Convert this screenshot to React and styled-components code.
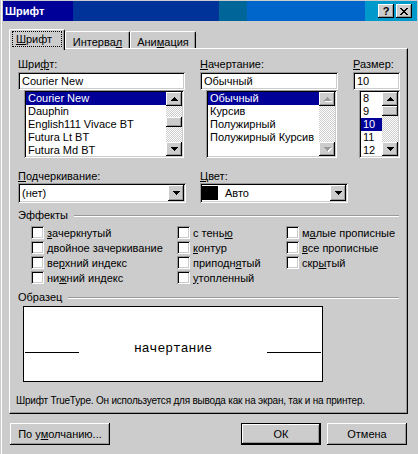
import React from "react";
import styled, { createGlobalStyle, css } from "styled-components";

const FACE = "#cccccc";
const SHADOW = "#999999";
const SEL = "#000099";

const GlobalStyle = createGlobalStyle`
  html, body { margin: 0; padding: 0; background: ${FACE}; }
  body {
    font-family: "Liberation Sans", Arial, sans-serif;
    font-size: 11px;
    color: #000;
  }
  *, *::before, *::after { box-sizing: border-box; }
`;

const raised = css`
  background-color: ${FACE};
  box-shadow: inset -1px -1px 0 #000, inset 1px 1px 0 #fff,
    inset -2px -2px 0 ${SHADOW}, inset 2px 2px 0 ${FACE};
`;

const sunken = css`
  box-shadow: inset 1px 1px 0 ${SHADOW}, inset -1px -1px 0 #fff,
    inset 2px 2px 0 #000, inset -2px -2px 0 ${FACE};
`;

const Window = styled.div`
  width: 418px;
  height: 454px;
  background: ${FACE};
  padding: 1px 1px 0 3px;
  display: flex;
  flex-direction: column;
  box-shadow: inset 1px 0 0 ${FACE}, inset 2px 0 0 #fff;
`;

const TitleBar = styled.div`
  height: 20px;
  flex: none;
  display: flex;
  align-items: center;
  padding: 0 5px 0 2px;
  color: #fff;
  background: linear-gradient(
    to right,
    #000099 0 70px,
    #003399 70px 216px,
    #006699 216px 244px,
    #0066cc 244px 362px,
    #0099cc 362px
  );
`;

const TitleText = styled.div`
  font-weight: bold;
  font-size: 11px;
  line-height: 14px;
`;

const CaptionButtons = styled.div`
  margin-left: auto;
  display: flex;
  gap: 2px;
`;

const CaptionButton = styled.div`
  width: 16px;
  height: 14px;
  ${raised};
  display: flex;
  align-items: center;
  justify-content: center;
  color: #000;
  font-weight: bold;
  font-size: 11px;
  line-height: 14px;
`;

const Body = styled.div`
  flex: 1;
  display: flex;
  flex-direction: column;
  padding: 8px 9px 0 6px;
`;

const TabStrip = styled.div`
  height: 19px;
  display: flex;
  align-items: flex-end;
`;

const Tab = styled.div`
  width: ${(p) => p.$w}px;
  height: ${(p) => (p.$active ? 21 : 17)}px;
  margin-bottom: ${(p) => (p.$active ? -2 : 0)}px;
  background: ${FACE};
  border-top: 1px solid #fff;
  border-left: 1px solid #fff;
  border-right: 1px solid #000;
  border-radius: 2px 2px 0 0;
  box-shadow: inset -1px 0 0 ${SHADOW};
  display: flex;
  justify-content: center;
  align-items: flex-start;
  padding: ${(p) => (p.$active ? "1px 2px 0" : "3px 2px 0")};
  line-height: 14px;
  white-space: nowrap;
  ${(p) => p.$active && "position: relative; z-index: 1;"}
`;

const TabLabel = styled.div`
  flex: 1;
  text-align: center;
  border: 1px dotted ${(p) => (p.$focus ? "#000" : "transparent")};
  padding-right: 6px;
`;

const U = styled.span`
  text-decoration: underline;
`;

const Panel = styled.div`
  height: 366px;
  flex: none;
  border-top: 1px solid #fff;
  border-left: 1px solid #fff;
  border-right: 1px solid #000;
  border-bottom: 1px solid #000;
  box-shadow: inset -1px -1px 0 ${SHADOW};
  padding: 9px 0 0 8px;
  display: flex;
  flex-direction: column;
`;

const TopFields = styled.div`
  display: grid;
  grid-template-columns: 167px 138px 47px;
  column-gap: 15px;
`;

const Field = styled.div`
  display: flex;
  flex-direction: column;
  min-width: 0;
`;

const Label = styled.div`
  height: 13px;
  line-height: 13px;
  white-space: nowrap;
`;

const TextBox = styled.div`
  height: 18px;
  margin-top: 1px;
  background: #fff;
  ${sunken};
  padding: 0 4px;
  line-height: 18px;
  white-space: nowrap;
  overflow: hidden;
`;

const ListBox = styled.div`
  height: 68px;
  margin: 0 ${(p) => p.$mr ?? 1}px 0 6px;
  background: #fff;
  ${sunken};
  padding: 2px;
  display: flex;
`;

const ListItems = styled.div`
  flex: 1;
  min-width: 0;
  overflow: hidden;
`;

const ListItem = styled.div`
  height: 13px;
  line-height: 13px;
  padding-left: 2px;
  white-space: nowrap;
  background: ${(p) => (p.$selected ? SEL : "transparent")};
  color: ${(p) => (p.$selected ? "#fff" : "#000")};
`;

const ScrollBar = styled.div`
  width: 16px;
  flex: none;
  display: flex;
  flex-direction: column;
`;

const ScrollButton = styled.div`
  height: 14px;
  flex: none;
  ${raised};
  display: flex;
  align-items: center;
  justify-content: center;
  padding-left: 1px;
`;

const ScrollTrack = styled.div`
  flex: 1;
  padding-top: ${(p) => p.$offset || 0}px;
  background-color: #fff;
  background-image: conic-gradient(
    ${FACE} 25%,
    #fff 0 50%,
    ${FACE} 0 75%,
    #fff 0
  );
  background-size: 2px 2px;
`;

const ScrollThumb = styled.div`
  height: 10px;
  ${raised};
`;

const ComboRow = styled.div`
  display: grid;
  grid-template-columns: 168px 148px;
  column-gap: 14px;
  margin-top: 12px;
`;

const Combo = styled.div`
  height: 20px;
  background: #fff;
  ${sunken};
  padding: 2px;
  display: flex;
  align-items: center;
`;

const ComboValue = styled.div`
  flex: 1;
  display: flex;
  align-items: center;
  gap: 7px;
  padding-left: ${(p) => (p.$swatch ? 0 : 2)}px;
  white-space: nowrap;
  line-height: 16px;
`;

const Swatch = styled.span`
  width: 16px;
  height: 14px;
  background: #000;
  flex: none;
`;

const DropButton = styled.div`
  width: 16px;
  height: 16px;
  flex: none;
  ${raised};
  display: flex;
  align-items: center;
  justify-content: center;
  padding-left: 1px;
`;

const GroupHeader = styled.div`
  display: flex;
  align-items: center;
  height: 13px;
  line-height: 13px;
  margin-top: 6px;
  margin-right: 8px;
`;

const GroupRule = styled.div`
  flex: 1;
  height: 2px;
  margin-left: 6px;
  border-top: 1px solid ${SHADOW};
  border-bottom: 1px solid #fff;
`;

const EffectsGrid = styled.div`
  display: grid;
  grid-template-columns: 146px 109px 1fr;
  grid-template-rows: repeat(4, 15px);
  grid-auto-flow: column;
  margin: 3px 0 0 13px;
`;

const CheckItem = styled.div`
  display: flex;
  align-items: center;
  gap: 3px;
  white-space: nowrap;
`;

const CheckBox = styled.span`
  width: 13px;
  height: 13px;
  flex: none;
  background: #fff;
  ${sunken};
`;

const SampleBox = styled.div`
  width: 300px;
  height: 76px;
  margin: 2px 0 0 5px;
  background: #fff;
  border: 1px solid #000;
  display: flex;
  align-items: flex-start;
  padding: 35px 1px 0;
`;

const SampleRule = styled.div`
  width: 54px;
  height: 1px;
  margin-top: 10px;
  flex: none;
  background: #000;
`;

const SampleText = styled.div`
  flex: 1;
  text-align: center;
  font-family: "Courier New", "Nimbus Mono PS", "Nimbus Mono L", FreeMono,
    "Liberation Mono", monospace;
  font-size: 13px;
  line-height: 13px;
`;

const Note = styled.div`
  margin: 12px 0 0 -2px;
  font-size: 10px;
  letter-spacing: -0.2px;
  line-height: 13px;
  white-space: nowrap;
`;

const ButtonRow = styled.div`
  display: flex;
  justify-content: space-between;
  margin-top: 9px;
  padding: 0 1px;
`;

const ButtonGroup = styled.div`
  display: flex;
  gap: 6px;
`;

const Button = styled.button`
  width: ${(p) => p.$w}px;
  height: 22px;
  padding: 0;
  font-family: inherit;
  font-size: 11px;
  color: #000;
  border: ${(p) => (p.$default ? "1px solid #000" : "none")};
  ${raised};
  line-height: 14px;
`;

const PixelSvg = styled.svg`
  display: block;
  shape-rendering: crispEdges;
`;

const UP = "M3 0h1v1H3zM2 1h3v1H2zM1 2h5v1H1zM0 3h7v1H0z";
const DOWN = "M0 0h7v1H0zM1 1h5v1H1zM2 2h3v1H2zM3 3h1v1H3z";
const X_D =
  "M0 0h2v1H0zM6 0h2v1H6zM1 1h2v1H1zM5 1h2v1H5zM2 2h4v1H2zM3 3h2v1H3zM2 4h4v1H2zM1 5h2v1H1zM5 5h2v1H5zM0 6h2v1H0zM6 6h2v1H6z";

function Arrow({ dir = "down", disabled }) {
  const d = dir === "up" ? UP : DOWN;
  return (
    <PixelSvg width="8" height="5" viewBox="0 0 8 5">
      {disabled && <path d={d} fill="#fff" transform="translate(1 1)" />}
      <path d={d} fill={disabled ? SHADOW : "#000"} />
    </PixelSvg>
  );
}

function CloseIcon() {
  return (
    <PixelSvg width="8" height="7" viewBox="0 0 8 7">
      <path d={X_D} fill="#000" />
    </PixelSvg>
  );
}

function Scroll({ disabled, offset }) {
  return (
    <ScrollBar>
      <ScrollButton>
        <Arrow dir="up" disabled={disabled} />
      </ScrollButton>
      <ScrollTrack $offset={offset}>{!disabled && <ScrollThumb />}</ScrollTrack>
      <ScrollButton>
        <Arrow dir="down" disabled={disabled} />
      </ScrollButton>
    </ScrollBar>
  );
}

function List({ items, selected, disabled, offset, mr }) {
  return (
    <ListBox $mr={mr}>
      <ListItems>
        {items.map((it) => (
          <ListItem key={it} $selected={it === selected}>
            {it}
          </ListItem>
        ))}
      </ListItems>
      <Scroll disabled={disabled} offset={offset} />
    </ListBox>
  );
}

const effects = [
  [<U key="u">з</U>, "ачеркнутый"],
  [<U key="u">д</U>, "войное зачеркивание"],
  ["ве", <U key="u">р</U>, "хний индекс"],
  ["ни", <U key="u">ж</U>, "ний индекс"],
  ["с тень", <U key="u">ю</U>],
  [<U key="u">к</U>, "онтур"],
  ["приподн", <U key="u">я</U>, "тый"],
  [<U key="u">у</U>, "топленный"],
  ["м", <U key="u">а</U>, "лые прописные"],
  [<U key="u">в</U>, "се прописные"],
  ["скр", <U key="u">ы</U>, "тый"],
];

export default function App() {
  return (
    <>
      <GlobalStyle />
      <Window>
        <TitleBar>
          <TitleText>Шрифт</TitleText>
          <CaptionButtons>
            <CaptionButton>?</CaptionButton>
            <CaptionButton>
              <CloseIcon />
            </CaptionButton>
          </CaptionButtons>
        </TitleBar>
        <Body>
          <TabStrip>
            <Tab $active $w={56}>
              <TabLabel $focus>
                <U>Ш</U>рифт
              </TabLabel>
            </Tab>
            <Tab $w={65}>
              Интерва<U>л</U>
            </Tab>
            <Tab $w={66}>
              Ани<U>м</U>ация
            </Tab>
          </TabStrip>
          <Panel>
            <TopFields>
              <Field>
                <Label>
                  Шри<U>ф</U>т:
                </Label>
                <TextBox>Courier New</TextBox>
                <List
                  items={["Courier New", "Dauphin", "English111 Vivace BT", "Futura Lt BT", "Futura Md BT"]}
                  selected="Courier New"
                  offset={11}
                />
              </Field>
              <Field>
                <Label>
                  <U>Н</U>ачертание:
                </Label>
                <TextBox>Обычный</TextBox>
                <List
                  items={["Обычный", "Курсив", "Полужирный", "Полужирный Курсив"]}
                  selected="Обычный"
                  disabled
                />
              </Field>
              <Field>
                <Label>
                  <U>Р</U>азмер:
                </Label>
                <TextBox>10</TextBox>
                <List items={["8", "9", "10", "11", "12"]} selected="10" offset={0} mr={0} />
              </Field>
            </TopFields>

            <ComboRow>
              <Field>
                <Label>
                  <U>П</U>одчеркивание:
                </Label>
                <Combo>
                  <ComboValue>(нет)</ComboValue>
                  <DropButton>
                    <Arrow />
                  </DropButton>
                </Combo>
              </Field>
              <Field>
                <Label>
                  <U>Ц</U>вет:
                </Label>
                <Combo>
                  <ComboValue $swatch>
                    <Swatch />
                    Авто
                  </ComboValue>
                  <DropButton>
                    <Arrow />
                  </DropButton>
                </Combo>
              </Field>
            </ComboRow>

            <GroupHeader>
              Эффекты
              <GroupRule />
            </GroupHeader>
            <EffectsGrid>
              {effects.map((parts, i) => (
                <CheckItem key={i}>
                  <CheckBox />
                  <span>{parts}</span>
                </CheckItem>
              ))}
            </EffectsGrid>

            <GroupHeader>
              Образец
              <GroupRule />
            </GroupHeader>
            <SampleBox>
              <SampleRule />
              <SampleText>начертание</SampleText>
              <SampleRule />
            </SampleBox>
            <Note>Шрифт TrueType. Он используется для вывода как на экран, так и на принтер.</Note>
          </Panel>
          <ButtonRow>
            <Button $w={100}>
              По у<U>м</U>олчанию...
            </Button>
            <ButtonGroup>
              <Button $w={80} $default>
                ОК
              </Button>
              <Button $w={80}>Отмена</Button>
            </ButtonGroup>
          </ButtonRow>
        </Body>
      </Window>
    </>
  );
}
